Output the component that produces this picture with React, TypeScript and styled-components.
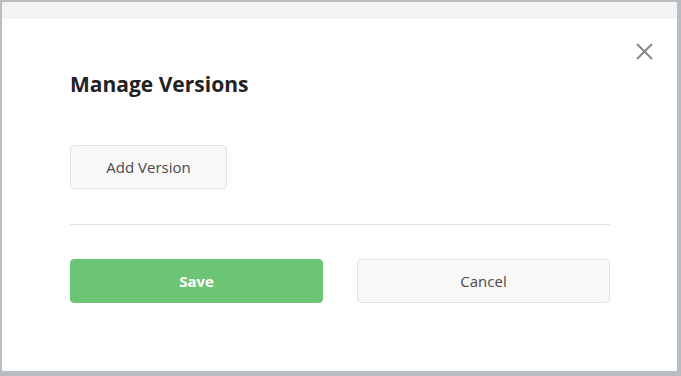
import React from "react";
import styled, { createGlobalStyle } from "styled-components";

const Global = createGlobalStyle`
  html, body { margin: 0; padding: 0; }
  body {
    background: #babdc0;
    font-family: "Open Sans", "Liberation Sans", sans-serif;
    width: 681px;
    height: 376px;
    overflow: hidden;
  }
`;

const Backdrop = styled.div`
  display: flex;
  padding: 2px 4px 5px 2px;
  height: 376px;
  box-sizing: border-box;
`;

const Panel = styled.div`
  flex: 1;
  display: flex;
  flex-direction: column;
  background: #ffffff;
`;

const TopStrip = styled.div`
  height: 17px;
  background: #f3f3f3;
`;

const Dialog = styled.div`
  position: relative;
  flex: 1;
  padding: 51px 67px 0 68px;
`;

const CloseButton = styled.button`
  position: absolute;
  top: 23px;
  right: 24px;
  width: 18px;
  height: 18px;
  padding: 0;
  border: none;
  background: transparent;
  display: flex;
  align-items: center;
  justify-content: center;
  cursor: pointer;
`;

const Title = styled.h2`
  margin: 0;
  font-size: 21px;
  line-height: 28px;
  font-weight: 700;
  color: #222222;
`;

const Button = styled.button<{ $variant?: "primary" | "default"; $width?: number }>`
  box-sizing: border-box;
  width: ${(p) => (p.$width ? `${p.$width}px` : "100%")};
  height: 44px;
  border-radius: 4px;
  font-family: "Open Sans", "Liberation Sans", sans-serif;
  font-size: 15px;
  cursor: pointer;
  border: 1px solid ${(p) => (p.$variant === "primary" ? "#6cc574" : "#e2e2e2")};
  background: ${(p) => (p.$variant === "primary" ? "#6cc574" : "#f8f8f8")};
  color: ${(p) => (p.$variant === "primary" ? "#ffffff" : "#4a4a4a")};
  font-weight: ${(p) => (p.$variant === "primary" ? 700 : 500)};
`;

const AddRow = styled.div`
  margin-top: 47px;
  display: flex;
`;

const Divider = styled.hr`
  margin: 35px 0 0 0;
  border: none;
  border-top: 1px solid #e4e4e4;
`;

const Actions = styled.div`
  margin-top: 34px;
  display: grid;
  grid-template-columns: 1fr 1fr;
  column-gap: 34px;
`;

export default function App() {
  return (
    <>
      <Global />
      <Backdrop>
        <Panel>
          <TopStrip />
          <Dialog>
            <CloseButton aria-label="Close">
              <svg width="17" height="17" viewBox="0 0 17 17">
                <path d="M1 1 L16 16 M16 1 L1 16" stroke="#888888" strokeWidth="2" fill="none" />
              </svg>
            </CloseButton>
            <Title>Manage Versions</Title>
            <AddRow>
              <Button $width={157}>Add Version</Button>
            </AddRow>
            <Divider />
            <Actions>
              <Button $variant="primary">Save</Button>
              <Button>Cancel</Button>
            </Actions>
          </Dialog>
        </Panel>
      </Backdrop>
    </>
  );
}
